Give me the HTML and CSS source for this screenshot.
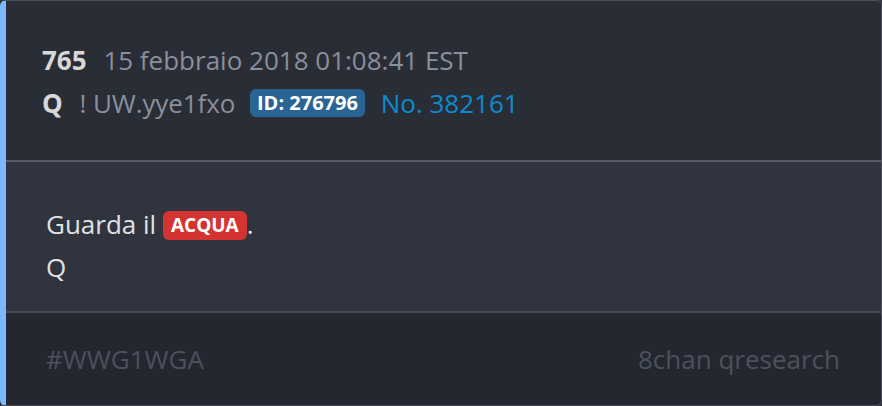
FILE: index.html
```html
<!DOCTYPE html>
<html lang="it">
<head>
    <meta charset="UTF-8">
    <title>Q post 765</title>
    <link rel="stylesheet" href="styles.css">
</head>
<body>
    <div class="post">
        <div class="post-head">
            <div class="row">
                <span class="num">765</span>
                <span class="muted">15 febbraio 2018 01:08:41 EST</span>
            </div>
            <div class="row">
                <span class="num">Q</span>
                <span class="muted trip">! UW.yye1fxo</span>
                <span class="badge badge-id">ID: 276796</span>
                <span class="link">No. 382161</span>
            </div>
        </div>
        <div class="post-body">
            <div class="row">Guarda il <span class="badge badge-red">ACQUA</span>.</div>
            <div class="row">Q</div>
        </div>
        <div class="post-foot">
            <span>#WWG1WGA</span>
            <span>8chan qresearch</span>
        </div>
    </div>
</body>
</html>
```

FILE: styles.css
```css
html, body { margin: 0; background: #2f343e; }
body { font-family: "Open Sans", "Noto Sans", sans-serif; font-size: 26px; }
.post {
    height: 406px;
    box-sizing: border-box;
    border: 1px solid #4b505a;
    border-left: 6px solid #7ab8ff;
    border-radius: 6px;
    overflow: hidden;
    display: flex;
    flex-direction: column;
    background: #2f343e;
}
.row { line-height: 43px; white-space: nowrap; }
.post-head {
    background: #292d36;
    padding: 38px 36px 35px;
    border-bottom: 2px solid #545964;
}
.num { color: #d8d8d8; font-weight: 700; margin-right: 10px; }
.muted { color: #8a8f9b; margin-right: 10px; }
.muted.trip { margin-right: 8px; letter-spacing: -0.1px; }
.badge {
    display: inline-block;
    color: #fff;
    font-weight: 700;
    border-radius: 6px;
    line-height: 1;
    vertical-align: 3px;
}
.badge-id {
    background: #2a6495;
    font-size: 20px;
    padding: 4px 7px 4px;
    margin-right: 9px;
}
.link { color: #0b8bd1; }
.post-body {
    color: #e0e1e3;
    padding: 41px 40px 22px;
    border-bottom: 2px solid #454a54;
}
.badge-red {
    background: #d33431;
    font-size: 19px;
    padding: 5px 8px;
    vertical-align: 2px;
}
.post-foot {
    flex: 1;
    background: #242730;
    color: #4c515c;
    display: flex;
    justify-content: space-between;
    align-items: center;
    padding: 0 41px 0 40px;
}
```
